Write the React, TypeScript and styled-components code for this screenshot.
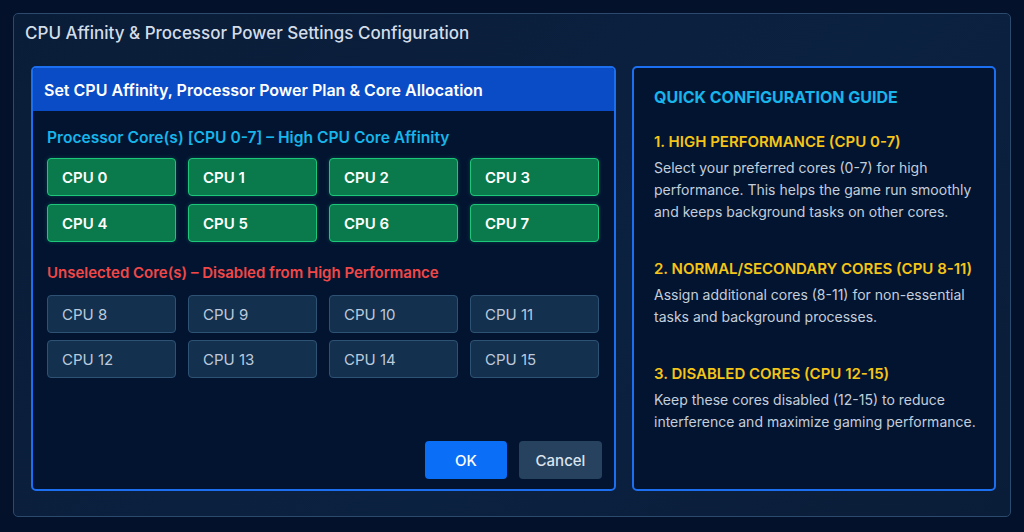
import React from 'react';
import styled, { createGlobalStyle } from 'styled-components';

const GlobalStyle = createGlobalStyle`
  html, body {
    margin: 0;
    padding: 0;
    background: #04112a;
    font-family: Inter, 'Noto Sans', 'Liberation Sans', sans-serif;
    -webkit-font-smoothing: antialiased;
  }
  * { box-sizing: border-box; }
`;

const Frame = styled.div`
  margin: 13px;
  height: 504px;
  border: 1px solid #2b4a6d;
  border-radius: 5px;
  background: linear-gradient(135deg, #0a1d38 0%, #0b2140 60%, #0a1d38 100%);
  display: flex;
  flex-direction: column;
`;

const FrameTitle = styled.h1`
  margin: 0;
  padding: 8px 11px 0;
  height: 52px;
  font-size: 17px;
  font-weight: 500;
  line-height: 22px;
  color: #d3dde9;
`;

const Body = styled.div`
  flex: 1;
  display: grid;
  grid-template-columns: 585px 364px;
  column-gap: 16px;
  padding: 0 0 25px 17px;
`;

const Panel = styled.section`
  border: 2px solid #1c6ff0;
  border-radius: 5px;
  background: #031431;
  display: flex;
  flex-direction: column;
  overflow: hidden;
`;

const PanelHeader = styled.div`
  height: 43px;
  background: #0a4cc6;
  padding: 0 11px;
  display: flex;
  align-items: center;
  font-size: 16px;
  font-weight: 600;
  color: #ffffff;
`;

const PanelBody = styled.div`
  flex: 1;
  padding: 17px 12px 10px 14px;
  display: flex;
  flex-direction: column;
`;

const GroupLabel = styled.div<{ $tone: 'cyan' | 'red' }>`
  font-size: ${(p) => (p.$tone === 'cyan' ? '15.6px' : '15px')};
  font-weight: 600;
  line-height: 20px;
  color: ${(p) => (p.$tone === 'cyan' ? '#17b5ea' : '#f04848')};
  margin-bottom: ${(p) => (p.$tone === 'cyan' ? '10px' : '12px')};
`;

const CoreGrid = styled.div<{ $gap: number }>`
  display: grid;
  grid-template-columns: repeat(4, 129px);
  column-gap: 12px;
  row-gap: ${(p) => p.$gap}px;
  margin-bottom: 21px;
`;

const CoreButton = styled.button<{ $active: boolean }>`
  height: 38px;
  padding: 0 0 0 14px;
  text-align: left;
  font-family: inherit;
  font-size: 15px;
  font-weight: ${(p) => (p.$active ? 600 : 400)};
  color: ${(p) => (p.$active ? '#ffffff' : '#bccadb')};
  background: ${(p) => (p.$active ? '#0a7a4c' : '#13304f')};
  border: 1.5px solid ${(p) => (p.$active ? '#1cc77a' : '#2e5274')};
  border-radius: 4px;
  box-shadow: ${(p) => (p.$active ? '0 0 4px rgba(28, 199, 122, 0.25)' : 'none')};
  cursor: pointer;
`;

const Footer = styled.div`
  margin-top: auto;
  display: flex;
  justify-content: flex-end;
  gap: 12px;
`;

const ActionButton = styled.button<{ $primary?: boolean }>`
  height: 38px;
  width: ${(p) => (p.$primary ? '82px' : '83px')};
  border: none;
  border-radius: 4px;
  font-family: inherit;
  font-size: 15px;
  font-weight: 500;
  color: ${(p) => (p.$primary ? '#ffffff' : '#dbe4ee')};
  background: ${(p) => (p.$primary ? '#0a6ef7' : '#26425f')};
  cursor: pointer;
`;

const GuidePanel = styled.aside`
  border: 2px solid #1c6ff0;
  border-radius: 5px;
  background: #031431;
  padding: 18px 10px 0 20px;
`;

const GuideTitle = styled.h2`
  margin: 0 0 23px;
  font-size: 16px;
  font-weight: 700;
  line-height: 22px;
  color: #17b5ea;
`;

const GuideItem = styled.div`
  margin-bottom: 35px;
`;

const GuideHeading = styled.h3`
  margin: 0 0 4px;
  font-size: 15px;
  font-weight: 600;
  line-height: 22px;
  color: #f5c518;
`;

const GuideText = styled.p`
  margin: 0;
  font-size: 14px;
  line-height: 22px;
  color: #c3cedb;
`;

const selected = [0, 1, 2, 3, 4, 5, 6, 7];
const unselected = [8, 9, 10, 11, 12, 13, 14, 15];

const guide = [
  {
    title: '1. HIGH PERFORMANCE (CPU 0-7)',
    lines: ['Select your preferred cores (0-7) for high', 'performance. This helps the game run smoothly', 'and keeps background tasks on other cores.'],
  },
  {
    title: '2. NORMAL/SECONDARY CORES (CPU 8-11)',
    lines: ['Assign additional cores (8-11) for non-essential', 'tasks and background processes.'],
  },
  {
    title: '3. DISABLED CORES (CPU 12-15)',
    lines: ['Keep these cores disabled (12-15) to reduce', 'interference and maximize gaming performance.'],
  },
];

export default function App() {
  return (
    <>
      <GlobalStyle />
      <Frame>
        <FrameTitle>CPU Affinity &amp; Processor Power Settings Configuration</FrameTitle>
        <Body>
          <Panel>
            <PanelHeader>Set CPU Affinity, Processor Power Plan &amp; Core Allocation</PanelHeader>
            <PanelBody>
              <GroupLabel $tone="cyan">Processor Core(s) [CPU 0-7] – High CPU Core Affinity</GroupLabel>
              <CoreGrid $gap={8}>
                {selected.map((n) => (
                  <CoreButton key={n} $active>
                    CPU {n}
                  </CoreButton>
                ))}
              </CoreGrid>
              <GroupLabel $tone="red">Unselected Core(s) – Disabled from High Performance</GroupLabel>
              <CoreGrid $gap={7}>
                {unselected.map((n) => (
                  <CoreButton key={n} $active={false}>
                    CPU {n}
                  </CoreButton>
                ))}
              </CoreGrid>
              <Footer>
                <ActionButton $primary>OK</ActionButton>
                <ActionButton>Cancel</ActionButton>
              </Footer>
            </PanelBody>
          </Panel>
          <GuidePanel>
            <GuideTitle>QUICK CONFIGURATION GUIDE</GuideTitle>
            {guide.map((g) => (
              <GuideItem key={g.title}>
                <GuideHeading>{g.title}</GuideHeading>
                <GuideText>
                  {g.lines.map((l, i) => (
                    <React.Fragment key={i}>
                      {i > 0 && <br />}
                      {l}
                    </React.Fragment>
                  ))}
                </GuideText>
              </GuideItem>
            ))}
          </GuidePanel>
        </Body>
      </Frame>
    </>
  );
}
